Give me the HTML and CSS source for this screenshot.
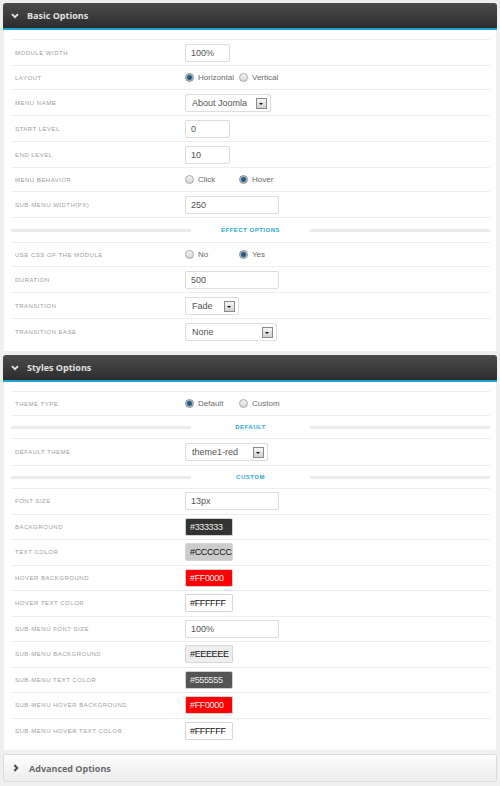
FILE: index.html
```html
<!DOCTYPE html>
<html>
<head>
<meta charset="utf-8">
<link rel="stylesheet" href="styles.css">
</head>
<body>
<div class="wrap">

  <section class="panel">
    <div class="panel-head">
      <svg class="chev" width="8" height="6" viewBox="0 0 8 6"><path d="M1 1.2 L4 4.2 L7 1.2" fill="none" stroke="#e4e4e4" stroke-width="1.9"/></svg>
      <span class="head-title">Basic Options</span>
    </div>
    <div class="panel-body">
      <div class="row"><div class="label">Module Width</div><div class="ctl"><div class="input w44">100%</div></div></div>
      <div class="row radio-row"><div class="label">Layout</div><div class="ctl"><span class="opt"><span class="radio on"></span>Horizontal</span><span class="opt"><span class="radio"></span>Vertical</span></div></div>
      <div class="row"><div class="label">Menu Name</div><div class="ctl"><div class="select w85">About Joomla<span class="arrow"></span></div></div></div>
      <div class="row"><div class="label">Start Level</div><div class="ctl"><div class="input w44">0</div></div></div>
      <div class="row"><div class="label">End Level</div><div class="ctl"><div class="input w44">10</div></div></div>
      <div class="row radio-row"><div class="label">Menu Behavior</div><div class="ctl"><span class="opt"><span class="radio"></span>Click</span><span class="opt"><span class="radio on"></span>Hover</span></div></div>
      <div class="row"><div class="label">Sub-Menu Width(px)</div><div class="ctl"><div class="input w93">250</div></div></div>
      <div class="row divider"><span class="bar"></span><span class="div-title">Effect Options</span><span class="bar"></span></div>
      <div class="row radio-row"><div class="label">Use CSS of the module</div><div class="ctl"><span class="opt"><span class="radio"></span>No</span><span class="opt"><span class="radio on"></span>Yes</span></div></div>
      <div class="row"><div class="label">Duration</div><div class="ctl"><div class="input w93">500</div></div></div>
      <div class="row"><div class="label">Transition</div><div class="ctl"><div class="select w53">Fade<span class="arrow"></span></div></div></div>
      <div class="row"><div class="label">Transition Ease</div><div class="ctl"><div class="select w91">None<span class="arrow"></span></div></div></div>
    </div>
  </section>

  <section class="panel">
    <div class="panel-head">
      <svg class="chev" width="8" height="6" viewBox="0 0 8 6"><path d="M1 1.2 L4 4.2 L7 1.2" fill="none" stroke="#e4e4e4" stroke-width="1.9"/></svg>
      <span class="head-title">Styles Options</span>
    </div>
    <div class="panel-body styles">
      <div class="row radio-row"><div class="label">Theme Type</div><div class="ctl"><span class="opt"><span class="radio on"></span>Default</span><span class="opt"><span class="radio"></span>Custom</span></div></div>
      <div class="row divider short"><span class="bar"></span><span class="div-title">Default</span><span class="bar"></span></div>
      <div class="row tall"><div class="label">Default Theme</div><div class="ctl"><div class="select w82">theme1-red<span class="arrow"></span></div></div></div>
      <div class="row divider short"><span class="bar"></span><span class="div-title">Custom</span><span class="bar"></span></div>
      <div class="row c"><div class="label">Font Size</div><div class="ctl"><div class="input w93">13px</div></div></div>
      <div class="row c"><div class="label">Background</div><div class="ctl"><div class="input color dark" style="background:#333333">#333333</div></div></div>
      <div class="row c"><div class="label">Text Color</div><div class="ctl"><div class="input color" style="background:#CCCCCC">#CCCCCC</div></div></div>
      <div class="row c"><div class="label">Hover Background</div><div class="ctl"><div class="input color dark" style="background:#FF0000">#FF0000</div></div></div>
      <div class="row c"><div class="label">Hover Text Color</div><div class="ctl"><div class="input color" style="background:#FFFFFF">#FFFFFF</div></div></div>
      <div class="row c"><div class="label">Sub-Menu Font Size</div><div class="ctl"><div class="input w93">100%</div></div></div>
      <div class="row c"><div class="label">Sub-Menu Background</div><div class="ctl"><div class="input color" style="background:#EEEEEE">#EEEEEE</div></div></div>
      <div class="row c"><div class="label">Sub-Menu Text Color</div><div class="ctl"><div class="input color dark" style="background:#555555">#555555</div></div></div>
      <div class="row c"><div class="label">Sub-Menu Hover Background</div><div class="ctl"><div class="input color dark" style="background:#FF0000">#FF0000</div></div></div>
      <div class="row c"><div class="label">Sub-Menu Hover Text Color</div><div class="ctl"><div class="input color" style="background:#FFFFFF">#FFFFFF</div></div></div>
    </div>
  </section>

  <section class="panel">
    <div class="panel-head light">
      <svg class="chev-r" width="6" height="8" viewBox="0 0 6 8"><path d="M1.4 1 L4.2 4 L1.4 7" fill="none" stroke="#444" stroke-width="1.9"/></svg>
      <span class="head-title">Advanced Options</span>
    </div>
  </section>

</div>
</body>
</html>
```

FILE: styles.css
```css
html, body {
  margin: 0;
  padding: 0;
  background: #efefef;
}
body {
  font-family: "Liberation Sans", Arial, sans-serif;
}
.wrap {
  padding: 3px 3px 0 3px;
  width: 494px;
}
.panel {
  margin-bottom: 4px;
}
.panel + .panel + .panel {
  margin-top: 1px;
}
.panel-head {
  height: 25px;
  border-bottom: 2px solid #1fa4d8;
  background: linear-gradient(#4c4c4c, #2c2c2c);
  border-radius: 3px 3px 0 0;
  display: flex;
  align-items: center;
  padding-left: 8px;
  box-sizing: content-box;
}
.chev {
  margin-top: 1px;
  margin-right: 8px;
}
.chev-r {
  margin-left: 1px;
  margin-right: 10px;
}
.head-title {
  font-family: "Open Sans", sans-serif;
  font-weight: 700;
  font-size: 9px;
  color: #e2e2e2;
}
.panel-head.light {
  height: 26px;
  border: 1px solid #dcdcdc;
  background: linear-gradient(#fdfdfd, #ececec);
  border-radius: 2px;
  padding-left: 8px;
}
.panel-head.light .head-title {
  color: #6a6a6a;
}
.panel-body {
  background: #fff;
  margin: 0 1px;
  padding: 9px 6px 7px 7px;
}
.row {
  display: grid;
  grid-template-columns: 174px 1fr;
  align-items: center;
  height: 25px;
  border-top: 1px solid #eeeeee;
}
.row.radio-row {
  height: 23px;
}
.row.tall {
  height: 26px;
}
.row.c {
  height: 24.5px;
}
.label {
  padding-left: 4px;
  font-size: 6px;
  letter-spacing: 0.5px;
  text-transform: uppercase;
  color: #9d9d9d;
}
.ctl {
  display: flex;
  align-items: center;
}
.input, .select {
  height: 16px;
  line-height: 16px;
  border: 1px solid #dddddd;
  border-radius: 2px;
  box-shadow: 0 0 1px rgba(0,0,0,0.06);
  font-size: 9px;
  color: #555;
  padding-left: 5px;
  box-sizing: content-box;
  background: #fff;
  position: relative;
  white-space: nowrap;
  overflow: hidden;
}
.w44 { width: 38px; }
.w93 { width: 87px; }
.w85 { width: 78px; }
.w53 { width: 46px; }
.w91 { width: 84px; }
.w82 { width: 75px; }
.select {
  padding-left: 6px;
}
.arrow {
  position: absolute;
  right: 3px;
  top: 3px;
  width: 9px;
  height: 9px;
  border: 1px solid #8a8a8a;
  background: linear-gradient(#f6f6f6, #cfcfcf);
}
.arrow::after {
  content: "";
  position: absolute;
  left: 2px;
  top: 4px;
  border-left: 2.5px solid transparent;
  border-right: 2.5px solid transparent;
  border-top: 2.5px solid #111;
}
.input.color {
  width: 42px;
  padding-left: 4px;
  letter-spacing: -0.35px;
  color: #111;
  border-color: #d6d6d6;
}
.input.color.dark {
  color: #eeeeee;
  border-color: #d0d0d0;
}
.opt {
  width: 54px;
  display: flex;
  align-items: center;
  font-size: 8px;
  color: #6a6a6a;
}
.radio {
  width: 7px;
  height: 7px;
  border: 1px solid #a9a9a9;
  border-radius: 50%;
  background: linear-gradient(#f4f4f4, #d4d4d4);
  margin-right: 4px;
  flex: none;
}
.radio.on {
  background: radial-gradient(circle, #1c5a8a 0, #245f8c 2px, #7d93a4 2.6px, #cfd5da 3.5px);
  border-color: #8c8c8c;
}
.divider {
  display: flex;
  align-items: center;
  height: 24px;
}
.divider.short {
  height: 22px;
}
.bar {
  width: 180px;
  height: 3px;
  background: #ebebeb;
  flex: none;
}
.div-title {
  flex: 1;
  text-align: center;
  font-size: 6px;
  font-weight: bold;
  letter-spacing: 0.5px;
  text-transform: uppercase;
  color: #2aa7da;
}
```
